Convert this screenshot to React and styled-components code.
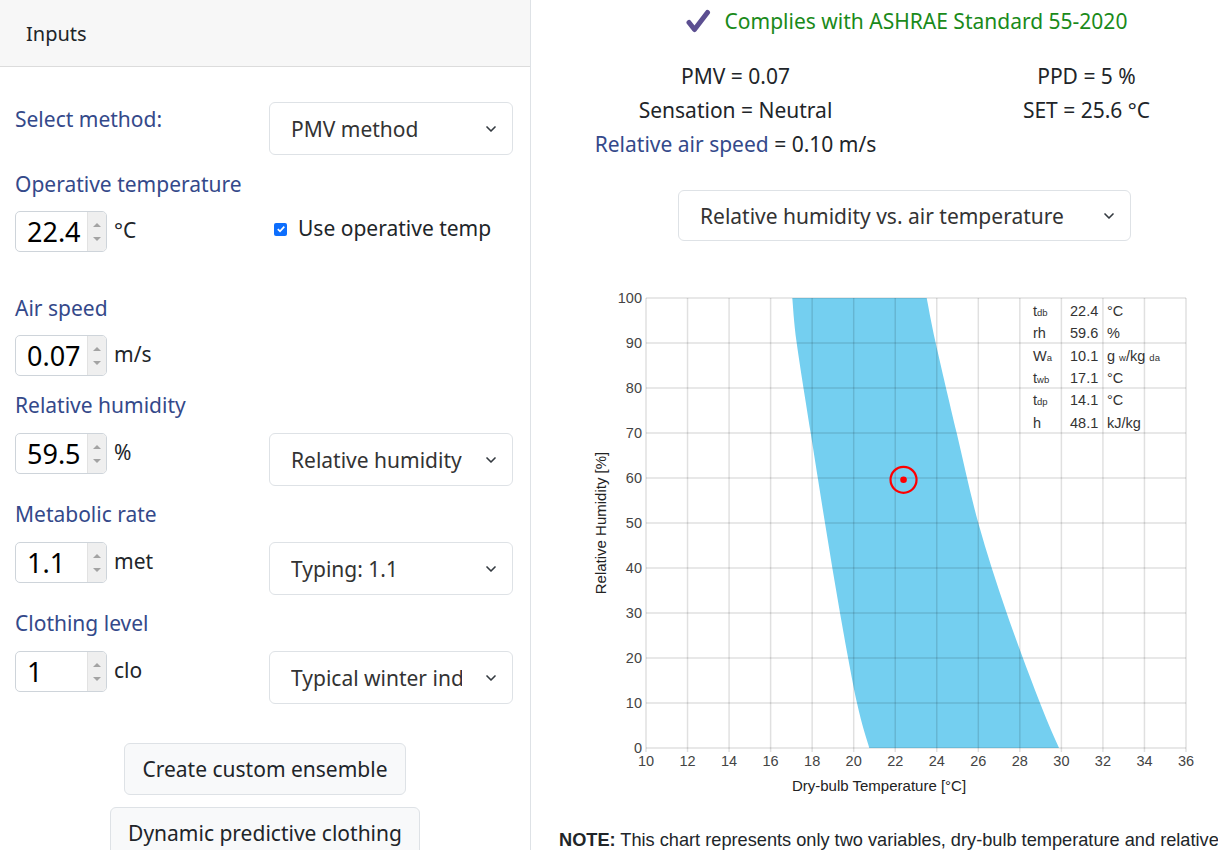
import React from "react";
import styled, { createGlobalStyle } from "styled-components";
import { ChevronDown } from "lucide-react";

const GlobalStyle = createGlobalStyle`
  html, body {
    margin: 0;
    padding: 0;
    background: #fff;
    overflow: hidden;
  }
  body {
    font-family: "Noto Sans", "Open Sans", sans-serif;
    color: #212529;
  }
`;

const Page = styled.div`
  display: flex;
  width: 100%;
  height: 850px;
  overflow: hidden;
`;

const Sidebar = styled.div`
  width: 530px;
  flex-shrink: 0;
  border-right: 1px solid #dee2e6;
`;

const SideHeader = styled.div`
  height: 67px;
  background: #f7f7f7;
  border-bottom: 1px solid #dcdcdc;
  display: flex;
  align-items: center;
  padding-left: 26px;
  font-size: 20px;
  box-sizing: border-box;
`;

const SideBody = styled.div`
  padding: 35px 15px 0;
`;

const Field = styled.div`
  display: grid;
  grid-template-columns: 254px 244px;
  align-items: start;
  margin-bottom: ${(p) => p.$gap || 0}px;
`;

const Label = styled.div`
  font-size: 21px;
  line-height: 30px;
  color: #34498a;
  padding-top: ${(p) => p.$top || 0}px;
  margin-bottom: ${(p) => p.$below || 0}px;
`;

const InputRow = styled.div`
  display: flex;
  align-items: center;
  height: 41px;
`;

const NumBox = styled.div`
  display: flex;
  width: 92px;
  height: 41px;
  box-sizing: border-box;
  border: 1px solid #ced4da;
  border-radius: 5px;
  overflow: hidden;
  background: #fff;
`;

const NumValue = styled.div`
  flex: 1;
  padding-left: 11px;
  font-size: 27px;
  line-height: 39px;
  color: #000;
`;

const Spin = styled.div`
  width: 18px;
  background: #efefef;
  border-left: 1px solid #e2e2e2;
  display: flex;
  flex-direction: column;
  justify-content: center;
  align-items: center;
  gap: 10px;
`;

const Tri = styled.span`
  width: 0;
  height: 0;
  border-left: 4px solid transparent;
  border-right: 4px solid transparent;
  ${(p) => (p.$down ? "border-top: 4px solid #a3a3a3;" : "border-bottom: 4px solid #a3a3a3;")}
`;

const Unit = styled.span`
  font-size: 21px;
  margin-left: 7px;
  color: #212529;
  margin-top: -4px;
`;

const Select = styled.div`
  position: relative;
  width: ${(p) => p.$w || 244}px;
  height: ${(p) => p.$h || 53}px;
  box-sizing: border-box;
  border: 1px solid #dee2e6;
  border-radius: 6px;
  display: flex;
  align-items: center;
  padding: 0 50px 0 21px;
  font-size: 21px;
  color: #333;
  background: #fff;
  margin-left: ${(p) => p.$ml || 0}px;
  margin-top: ${(p) => p.$mt || 0}px;
`;

const SelectText = styled.span`
  white-space: nowrap;
  overflow: hidden;
  flex: 1;
`;

const Chevron = styled(ChevronDown)`
  position: absolute;
  right: 13px;
  top: 50%;
  margin-top: -8px;
  color: #343a40;
`;

const CheckWrap = styled.label`
  display: flex;
  align-items: center;
  height: 41px;
  padding-left: 5px;
  font-size: 21px;
  margin-top: -4px;
`;

const CheckBox = styled.span`
  width: 13px;
  height: 13px;
  border-radius: 2px;
  background: #0d6efd;
  display: inline-flex;
  align-items: center;
  justify-content: center;
  margin-right: 11px;
  margin-top: 3px;
`;

const Buttons = styled.div`
  display: flex;
  flex-direction: column;
  align-items: center;
  gap: 12px;
  margin-top: 39px;
`;

const Button = styled.button`
  height: 52px;
  padding: 0 17px;
  font-family: inherit;
  font-size: 21px;
  color: #212529;
  background: #f8f9fa;
  border: 1px solid #dee2e6;
  border-radius: 6px;
`;

const Main = styled.div`
  width: 731px;
  flex-shrink: 0;
  box-sizing: border-box;
  padding-left: 29px;
`;

const Verdict = styled.div`
  display: flex;
  align-items: center;
  justify-content: center;
  gap: 14px;
  height: 42px;
  padding-right: 10px;
  font-size: 21px;
  color: #1a8a1a;
`;

const Results = styled.div`
  display: grid;
  grid-template-columns: 351px 351px;
  margin-top: 17px;
  font-size: 21px;
  line-height: 34px;
  text-align: center;
  color: #212529;
`;

const Blue = styled.span`
  color: #34498a;
`;

const Chart = styled.svg`
  display: block;
  margin: 39px 0 0 20px;
  font-family: "Liberation Sans", Arial, sans-serif;
`;

const Note = styled.div`
  margin: 28px 0 0 -1px;
  font-family: "Liberation Sans", Arial, sans-serif;
  font-size: 18.2px;
  line-height: 24px;
  white-space: nowrap;
  color: #212529;
`;

const X0 = 66;
const X1 = 606;
const Y0 = 18;
const Y1 = 468;
const tx = (t) => X0 + ((t - 10) * (X1 - X0)) / 26;
const ry = (rh) => Y1 - (rh * (Y1 - Y0)) / 100;

const leftEdge = [
  [212.3, 18], [216.7, 63], [230.7, 153], [245, 243], [260, 333], [277, 423], [289.3, 468],
];
const rightEdge = [
  [479, 468], [460, 423], [426.7, 333], [398.3, 243], [376.7, 153], [355.7, 63], [346.7, 18],
];

// smooth curve through points (catmull-rom to bezier)
const smooth = (pts) => {
  let d = "";
  for (let i = 0; i < pts.length - 1; i++) {
    const p0 = pts[i - 1] || pts[i];
    const p1 = pts[i];
    const p2 = pts[i + 1];
    const p3 = pts[i + 2] || p2;
    const c1 = [p1[0] + (p2[0] - p0[0]) / 6, p1[1] + (p2[1] - p0[1]) / 6];
    const c2 = [p2[0] - (p3[0] - p1[0]) / 6, p2[1] - (p3[1] - p1[1]) / 6];
    d += ` C${c1[0]},${c1[1]} ${c2[0]},${c2[1]} ${p2[0]},${p2[1]}`;
  }
  return d;
};

const zonePath =
  `M${leftEdge[0][0]},${leftEdge[0][1]}` +
  smooth(leftEdge) +
  ` L${rightEdge[0][0]},${rightEdge[0][1]}` +
  smooth(rightEdge) +
  " Z";

const xTicks = Array.from({ length: 14 }, (_, i) => 10 + i * 2);
const yTicks = Array.from({ length: 11 }, (_, i) => i * 10);

const tableRows = [
  ["t", "db", "22.4", "°C"],
  ["rh", "", "59.6", "%"],
  ["W", "a", "10.1", "g w/kg da"],
  ["t", "wb", "17.1", "°C"],
  ["t", "dp", "14.1", "°C"],
  ["h", "", "48.1", "kJ/kg"],
];

const Psychro = () => (
  <Chart width="640" height="520" viewBox="0 0 640 520">
    <path d={zonePath} fill="rgb(116,207,240)" />
    {xTicks.map((t) => (
      <line key={"vx" + t} x1={tx(t)} x2={tx(t)} y1={Y0} y2={Y1 + 4} stroke="rgba(0,0,0,0.12)" strokeWidth="1.5" />
    ))}
    {yTicks.map((v) => (
      <line key={"hy" + v} x1={X0} x2={X1} y1={ry(v)} y2={ry(v)} stroke="rgba(0,0,0,0.12)" strokeWidth="1.5" />
    ))}
    {xTicks.map((t) => (
      <text key={"lx" + t} x={tx(t)} y={Y1 + 18} fontSize="14.5" fill="#444" textAnchor="middle">
        {t}
      </text>
    ))}
    {yTicks.map((v) => (
      <text key={"ly" + v} x={X0 - 4} y={ry(v) + 5} fontSize="14.5" fill="#444" textAnchor="end">
        {v}
      </text>
    ))}
    <text x={299} y={511} fontSize="15" fill="#222" textAnchor="middle">
      Dry-bulb Temperature [°C]
    </text>
    <text x={26} y={243} fontSize="15" fill="#222" textAnchor="middle" transform="rotate(-90 26 243)">
      Relative Humidity [%]
    </text>
    {tableRows.map(([a, sub, val, unit], i) => {
      const y = 36 + i * 22.3;
      return (
        <g key={a + sub} fontSize="14.5" fill="#333">
          <text x={453} y={y}>
            {a}
            {sub && <tspan fontSize="9.5">{sub}</tspan>}
          </text>
          <text x={490} y={y}>{val}</text>
          {unit === "g w/kg da" ? (
            <text x={527} y={y}>
              g <tspan fontSize="9.5">w</tspan>/kg <tspan fontSize="9.5">da</tspan>
            </text>
          ) : (
            <text x={527} y={y}>{unit}</text>
          )}
        </g>
      );
    })}
    <circle cx={tx(22.4)} cy={ry(59.6)} r="13" fill="none" stroke="#f00" strokeWidth="2.2" />
    <circle cx={tx(22.4)} cy={ry(59.6)} r="3.3" fill="#f00" />
  </Chart>
);

const Num = ({ value, unit }) => (
  <InputRow>
    <NumBox>
      <NumValue>{value}</NumValue>
      <Spin>
        <Tri />
        <Tri $down />
      </Spin>
    </NumBox>
    <Unit>{unit}</Unit>
  </InputRow>
);

const Dropdown = ({ children, ...rest }) => (
  <Select {...rest}>
    <SelectText>{children}</SelectText>
    <Chevron size={16} strokeWidth={2.5} />
  </Select>
);

export default function App() {
  return (
    <>
      <GlobalStyle />
      <Page>
        <Sidebar>
          <SideHeader>Inputs</SideHeader>
          <SideBody>
            <Field $gap={14}>
              <Label $top={2}>Select method:</Label>
              <Dropdown>PMV method</Dropdown>
            </Field>

            <Label $below={12}>Operative temperature</Label>
            <Field $gap={41}>
              <Num value="22.4" unit="°C" />
              <CheckWrap>
                <CheckBox>
                  <svg width="10" height="10" viewBox="0 0 10 10">
                    <path d="M1.8 5.2 L4 7.3 L8.3 2.6" fill="none" stroke="#fff" strokeWidth="1.7" />
                  </svg>
                </CheckBox>
                Use operative temp
              </CheckWrap>
            </Field>

            <Label $below={12}>Air speed</Label>
            <Field $gap={14}>
              <Num value="0.07" unit="m/s" />
            </Field>

            <Label $below={13}>Relative humidity</Label>
            <Field $gap={13}>
              <Num value="59.5" unit="%" />
              <Dropdown>Relative humidity</Dropdown>
            </Field>

            <Label $below={13}>Metabolic rate</Label>
            <Field $gap={13}>
              <Num value="1.1" unit="met" />
              <Dropdown>Typing: 1.1</Dropdown>
            </Field>

            <Label $below={13}>Clothing level</Label>
            <Field>
              <Num value="1" unit="clo" />
              <Dropdown>Typical winter indoor</Dropdown>
            </Field>

            <Buttons>
              <Button>Create custom ensemble</Button>
              <Button>Dynamic predictive clothing</Button>
            </Buttons>
          </SideBody>
        </Sidebar>

        <Main>
          <Verdict>
            <svg width="26" height="24" viewBox="0 0 26 24">
              <path
                d="M4 13.5 L9.5 20.5 L22.5 3.5"
                fill="none"
                stroke="#5c4f91"
                strokeWidth="5"
                strokeLinecap="round"
                strokeLinejoin="round"
              />
            </svg>
            Complies with ASHRAE Standard 55-2020
          </Verdict>

          <Results>
            <div>PMV = 0.07</div>
            <div>PPD = 5 %</div>
            <div>Sensation = Neutral</div>
            <div>SET = 25.6 °C</div>
            <div>
              <Blue>Relative air speed</Blue> = 0.10 m/s
            </div>
          </Results>

          <Dropdown $w={453} $h={51} $ml={118} $mt={29}>
            Relative humidity vs. air temperature
          </Dropdown>

          <Psychro />

          <Note>
            <b>NOTE:</b> This chart represents only two variables, dry-bulb temperature and relative humidity.
          </Note>
        </Main>
      </Page>
    </>
  );
}
